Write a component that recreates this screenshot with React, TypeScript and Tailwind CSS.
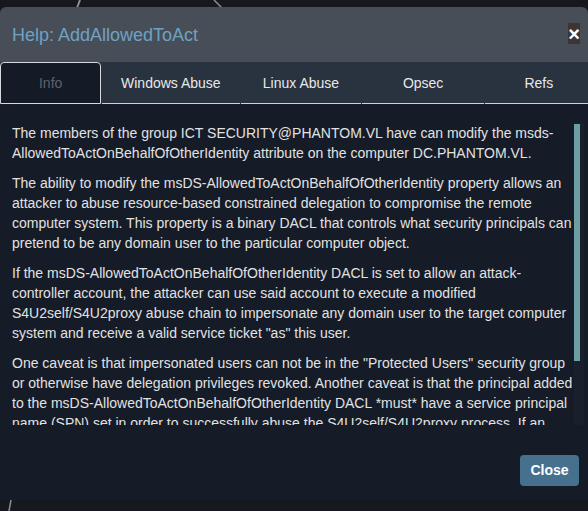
import React from "react";

const tabs = [
  { label: "Info", w: "w-[102px]", active: true },
  { label: "Windows Abuse", w: "w-[139px]" },
  { label: "Linux Abuse", w: "w-[121px]" },
  { label: "Opsec", w: "w-[123px]" },
  { label: "Refs", w: "w-[103px] pl-[5px]" },
];

export default function App() {
  return (
    <div
      className="relative w-[588px] h-[511px] overflow-hidden bg-[#16181d] pt-[7px]"
      style={{ fontFamily: '"Liberation Sans", Arial, sans-serif' }}
    >
      <svg className="absolute inset-0 pointer-events-none" width="588" height="511">
        <line x1="80" y1="0" x2="77" y2="8" stroke="#8d8f93" strokeWidth="2" />
        <line x1="214" y1="0" x2="222" y2="8" stroke="#8d8f93" strokeWidth="1.5" />
        <line x1="11" y1="500" x2="9" y2="511" stroke="#8d8f93" strokeWidth="1.5" />
      </svg>
      <div className="relative w-[588px] h-[493px] rounded-t-[6px] overflow-hidden flex flex-col bg-[#151b27]">
        {/* header */}
        <div className="h-[55px] shrink-0 bg-[#474e58] flex items-center justify-between pl-[12px] pr-[8px]">
          <h4 className="text-[18px] text-[#6ea2c3] leading-none">Help: AddAllowedToAct</h4>
          <button className="w-[12px] h-[21px] bg-[#3d3434] text-white font-bold text-[20px] leading-none flex items-center justify-center mt-[-2px]">
            ×
          </button>
        </div>
        {/* tabs */}
        <div className="h-[42px] shrink-0 bg-[#29323f] flex">
          {tabs.map((t) =>
            t.active ? (
              <div
                key={t.label}
                className={`${t.w} h-full flex items-center justify-center text-[14px] text-[#5b6370] bg-[#141a26] border border-[#d6d9dd] rounded-t-[4px]`}
              >
                {t.label}
              </div>
            ) : (
              <div
                key={t.label}
                className={`${t.w} h-full flex items-center justify-center text-[14px] text-[#e8e8e8] border-b border-[#cfd3d8] mx-[0.5px] pt-[1px]`}
              >
                {t.label}
              </div>
            )
          )}
        </div>
        {/* body */}
        <div className="pt-[19px] pl-[12px] flex">
          <div className="w-[562px] h-[302px] overflow-hidden text-[14px] leading-[20px] text-[#e2e2e2]">
            <p className="mb-[10px]">
              The members of the group ICT SECURITY@PHANTOM.VL have can modify the msds-AllowedToActOnBehalfOfOtherIdentity attribute on the computer DC.PHANTOM.VL.
            </p>
            <p className="mb-[10px]">
              The ability to modify the msDS-AllowedToActOnBehalfOfOtherIdentity property allows an attacker to abuse resource-based constrained delegation to compromise the remote computer system. This property is a binary DACL that controls what security principals can pretend to be any domain user to the particular computer object.
            </p>
            <p className="mb-[10px]">
              If the msDS-AllowedToActOnBehalfOfOtherIdentity DACL is set to allow an attack-controller account, the attacker can use said account to execute a modified S4U2self/S4U2proxy abuse chain to impersonate any domain user to the target computer system and receive a valid service ticket "as" this user.
            </p>
            <p className="mb-[10px]">
              One caveat is that impersonated users can not be in the "Protected Users" security group or otherwise have delegation privileges revoked. Another caveat is that the principal added to the msDS-AllowedToActOnBehalfOfOtherIdentity DACL *must* have a service principal name (SPN) set in order to successfully abuse the S4U2self/S4U2proxy process. If an account does not have an SPN set, a new computer account can be created with the SPN set.
            </p>
          </div>
          <div className="w-[10px] h-[302px] bg-[#19202b]">
            <div className="w-[6px] h-[237px] mt-[1px] bg-[#6c9ea6]" />
          </div>
        </div>
        {/* footer */}
        <div className="flex justify-end pt-[30px] pr-[9px]">
          <button className="h-[31px] w-[59px] rounded-[4px] bg-[#45718f] text-white font-bold text-[14px] flex items-center justify-center">
            Close
          </button>
        </div>
      </div>
    </div>
  );
}
